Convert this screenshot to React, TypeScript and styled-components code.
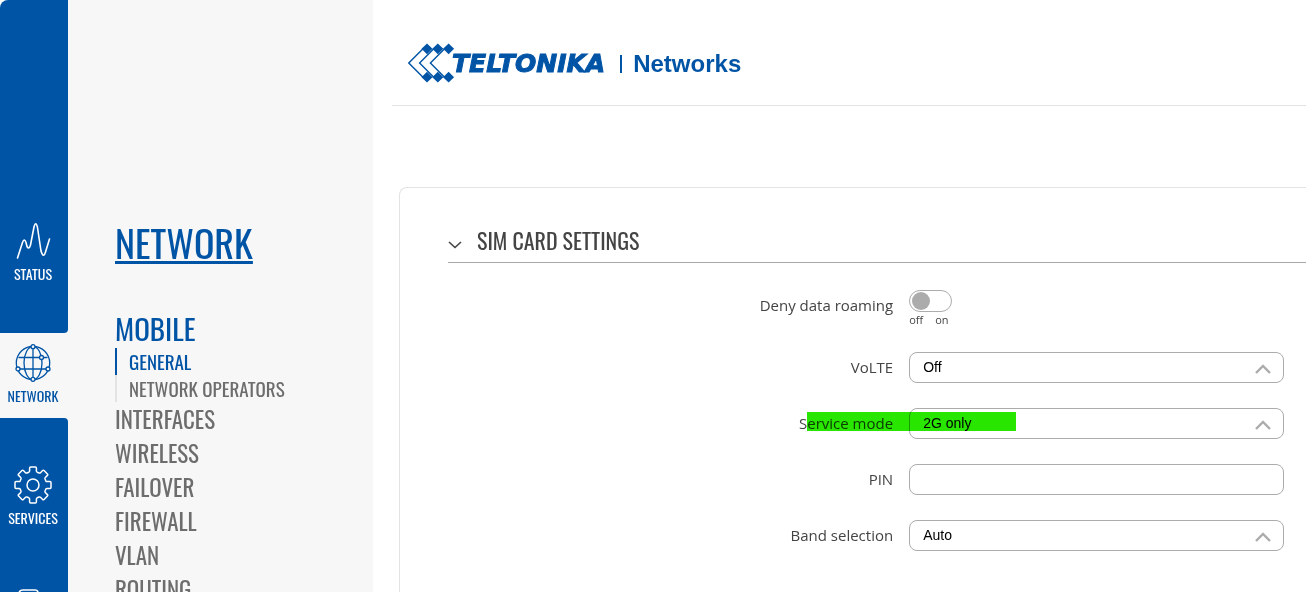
import React, { useState } from "react";
import styled, { createGlobalStyle, css } from "styled-components";

const blue = "#0054a6";
const panel = "#f7f7f7";
const condensed = `Oswald, "Liberation Sans Narrow", "Roboto Condensed", sans-serif`;

const GlobalStyle = createGlobalStyle`
  *, *::before, *::after { box-sizing: border-box; }
  body { margin: 0; background: #fff; color: #444; font-family: "Open Sans", sans-serif; }
`;

const Shell = styled.div`
  display: flex;
  height: 100vh;
  overflow: hidden;
`;

const Rail = styled.nav`
  flex: 0 0 68px;
  display: flex;
  flex-direction: column;
  background: ${panel};
  border-top-left-radius: 8px;
  overflow: hidden;
`;

const RailBlock = styled.div<{ $last?: boolean }>`
  display: flex;
  flex-direction: column;
  gap: 58px;
  background: ${blue};
  ${(p) =>
    p.$last
      ? css`
          flex: 1 0 auto;
          padding-top: 48px;
          border-top-right-radius: 4px;
        `
      : css`
          padding: 222px 0 48px;
          border-bottom-right-radius: 4px;
        `}
`;

const RailLink = styled.a<{ $active?: boolean }>`
  display: flex;
  flex-direction: column;
  align-items: center;
  gap: 3px;
  padding: ${(p) => (p.$active ? "11px 2px 11px 0" : "0 2px 0 0")};
  color: ${(p) => (p.$active ? blue : "#fff")};
  font: 400 14px/22px ${condensed};
  text-decoration: none;

  svg {
    display: block;
    width: 38px;
    height: 38px;
    fill: none;
    stroke: currentColor;
    stroke-linecap: round;
    stroke-linejoin: round;
  }
`;

const Menu = styled.nav`
  flex: 0 0 305px;
  padding: 211px 20px 0 47px;
  background: ${panel};
  font-family: ${condensed};
  font-weight: 400;
`;

const MenuTitle = styled.h1`
  margin: 0 0 36px;
  font-size: 38px;
  line-height: 62px;
  font-weight: 400;
  color: ${blue};
`;

const TitleLink = styled.a`
  color: inherit;
  text-decoration: underline;
  text-decoration-thickness: 3px;
  text-underline-offset: 2px;
`;

const MenuList = styled.ul`
  margin: 0;
  padding: 0;
  list-style: none;
`;

const MenuLink = styled.a<{ $open?: boolean }>`
  display: block;
  padding-bottom: ${(p) => (p.$open ? 1 : 0)}px;
  font-size: ${(p) => (p.$open ? 29 : 23)}px;
  line-height: ${(p) => (p.$open ? 38 : 34)}px;
  color: ${(p) => (p.$open ? blue : "#6d6d6d")};
  text-decoration: none;
`;

const SubLink = styled.a<{ $active?: boolean }>`
  display: block;
  padding-left: 12px;
  border-left: 2px solid ${(p) => (p.$active ? blue : "#e3e3e3")};
  font-size: 19px;
  line-height: 27px;
  color: ${(p) => (p.$active ? blue : "#6d6d6d")};
  text-decoration: none;
`;

const Main = styled.main`
  flex: 1 1 0;
  min-width: 0;
  padding-left: 19px;
`;

const Header = styled.header`
  display: flex;
  align-items: center;
  height: 106px;
  padding: 20px 16px 0;
  border-bottom: 1px solid #e3e3e3;
  color: ${blue};
`;

const LogoMark = styled.svg`
  display: block;
  width: 48px;
  height: 40px;
`;

const LogoText = styled.span`
  display: flex;
  align-items: center;
  margin-left: -4px;
  padding-top: 3px;
`;

const Brand = styled.span`
  font: italic 700 25px/32px "DejaVu Sans", sans-serif;
  -webkit-text-stroke: 1px ${blue};
`;

const BrandRule = styled.span`
  width: 2px;
  height: 18px;
  margin: 0 11px 0 15px;
  background: ${blue};
`;

const Division = styled.span`
  font: 700 24px/32px "Liberation Sans", Arial, sans-serif;
`;

const Card = styled.section`
  min-height: 600px;
  margin: 81px 0 0 7px;
  padding: 32px 0 0 48px;
  border: solid #e3e3e3;
  border-width: 1px 0 0 1px;
  border-top-left-radius: 8px;
`;

const CardTitle = styled.h2`
  margin: 0 0 27px;
  padding-bottom: 2px;
  border-bottom: 1px solid #a8a8a8;
  font: 400 22px/40px ${condensed};
`;

const Collapse = styled.button`
  display: flex;
  align-items: center;
  gap: 15px;
  width: 100%;
  padding: 0;
  border: 0;
  background: none;
  color: #444;
  font: inherit;
  text-align: left;

  svg {
    margin-top: 10px;
  }
`;

const Form = styled.form`
  display: flex;
  flex-direction: column;
  gap: 25px;
  padding-right: 22px;
`;

const Row = styled.div`
  position: relative;
  display: grid;
  grid-template-columns: minmax(0, 19fr) minmax(0, 16fr);
  column-gap: 16px;
  align-items: start;
  min-height: 31px;
`;

const RowLabel = styled.label`
  font-size: 15px;
  line-height: 30px;
  text-align: right;
`;

const control = css`
  display: block;
  width: 100%;
  height: 31px;
  padding: 0 40px 2px 13px;
  border: 1px solid #acacac;
  border-radius: 8px;
  background: #fff;
  color: #000;
  font: 14px "Liberation Sans", Arial, sans-serif;
`;

const SelectWrap = styled.div`
  display: grid;
  align-items: center;

  > * {
    grid-area: 1 / 1;
  }

  svg {
    justify-self: end;
    margin: 2px 13px 0 0;
    pointer-events: none;
  }
`;

const Select = styled.select`
  ${control}
  appearance: none;
`;

const TextInput = styled.input`
  ${control}
`;

const Switch = styled.div`
  display: flex;
  flex-direction: column;
`;

const SwitchInput = styled.input`
  appearance: none;
  width: 43px;
  height: 22px;
  margin: 0;
  padding: 1px 2px;
  border: 1px solid #acacac;
  border-radius: 11px;

  &::before {
    content: "";
    display: block;
    width: 18px;
    height: 18px;
    border-radius: 50%;
    background: #acacac;
  }

  &:checked::before {
    margin-left: auto;
  }
`;

const SwitchStates = styled.span`
  display: flex;
  gap: 12px;
  font-size: 11px;
  line-height: 15px;
`;

const Marker = styled.span`
  position: absolute;
  top: 4px;
  left: 43%;
  width: 25%;
  height: 19px;
  background: #28e600;
  mix-blend-mode: multiply;
  pointer-events: none;
`;

const StatusIcon = () => (
  <svg viewBox="0 0 38 38" strokeWidth="1.600" aria-hidden="true">
    <path d="M3.500 36L8.500 20.500Q10.300 15.500 12 20.500L13 24.500Q15 28 16.500 23L20 5Q21.700 -1.500 23.400 5L27 29Q29.500 37 31.500 30L35.500 17" />
  </svg>
);

const GlobeIcon = () => (
  <svg viewBox="0 0 38 38" strokeWidth="1.300" aria-hidden="true">
    <circle cx="19" cy="19" r="16.700" />
    <ellipse cx="19" cy="19" rx="9" ry="16.700" />
    <path d="M19 2.500V35.500M5 13.500H33M3 25H35" />
    <g fill={panel}>
      <circle cx="19" cy="2.700" r="2" />
      <circle cx="27.500" cy="13.500" r="2" />
      <circle cx="4" cy="25" r="2" />
      <circle cx="34" cy="25" r="2" />
      <circle cx="19" cy="35.300" r="2" />
    </g>
  </svg>
);

// Eight equal teeth around the hub, each rotated by 45 degrees.
const gearPath =
  Array.from({ length: 8 }, (_, k) => {
    const a = (k * Math.PI) / 4;
    const at = (x: number, y: number) =>
      `${(19 + x * Math.cos(a) - y * Math.sin(a)).toFixed(2)} ${(19 + x * Math.sin(a) + y * Math.cos(a)).toFixed(2)}`;
    return `${k ? "L" : "M"}${at(-4.2, -12.8)}Q${at(-3.4, -13.2)} ${at(-3.4, -14)}L${at(-3.4, -17)}Q${at(-3.4, -18)} ${at(-2.4, -18)}L${at(2.4, -18)}Q${at(3.4, -18)} ${at(3.4, -17)}L${at(3.4, -14)}Q${at(3.4, -13.2)} ${at(4.2, -12.8)}`;
  }).join("") + "Z";

const GearIcon = () => (
  <svg viewBox="0 0 38 38" strokeWidth="1.500" aria-hidden="true">
    <circle cx="19" cy="19" r="6" />
    <path d={gearPath} />
  </svg>
);

const SystemIcon = () => (
  <svg viewBox="0 0 38 38" strokeWidth="1.500" aria-hidden="true">
    <path d="M5 7Q5 3 9 3H21Q24 3 24 6V8H29V36H5z" />
  </svg>
);

const TeltonikaMark = () => (
  <LogoMark viewBox="0 0 48 40" aria-hidden="true">
    {[0, 10.8, 21.6].map((x) => (
      <g key={x}>
        <path d={`M${15.5 + x} 5.300L${0.8 + x} 20L${15.5 + x} 34.700`} fill="none" stroke={blue} strokeWidth="1.400" />
        <path
          d={`M${19 + x} .4l5.500 5.400-5.500 5.400-5.500-5.400zM${19 + x} 28.800l5.500 5.400-5.500 5.400-5.500-5.400z`}
          fill={blue}
        />
      </g>
    ))}
  </LogoMark>
);

const ArrowUp = () => (
  <svg width="16" height="10" viewBox="0 0 16 10" fill="none" stroke="#acacac" strokeWidth="2.400" aria-hidden="true">
    <path d="M1 9L8 2L15 9" />
  </svg>
);

const ArrowDown = () => (
  <svg width="14" height="8" viewBox="0 0 14 8" fill="none" stroke="#444" strokeWidth="1.600" aria-hidden="true">
    <path d="M1 1L7 6.500L13 1" />
  </svg>
);

type FieldProps = { id: string; label: string; options?: string[]; marked?: boolean };

function Field({ id, label, options, marked }: FieldProps) {
  return (
    <Row>
      <RowLabel htmlFor={id}>{label}</RowLabel>
      {options ? (
        <SelectWrap>
          <Select id={id}>
            {options.map((o) => (
              <option key={o}>{o}</option>
            ))}
          </Select>
          <ArrowUp />
        </SelectWrap>
      ) : (
        <TextInput id={id} type="text" />
      )}
      {marked && <Marker />}
    </Row>
  );
}

const sections = ["INTERFACES", "WIRELESS", "FAILOVER", "FIREWALL", "VLAN", "ROUTING"];

export default function App() {
  const [open, setOpen] = useState(true);
  return (
    <Shell>
      <GlobalStyle />
      <Rail>
        <RailBlock>
          <RailLink href="#status">
            <StatusIcon />
            STATUS
          </RailLink>
        </RailBlock>
        <RailLink href="#network" $active>
          <GlobeIcon />
          NETWORK
        </RailLink>
        <RailBlock $last>
          <RailLink href="#services">
            <GearIcon />
            SERVICES
          </RailLink>
          <RailLink href="#system" aria-label="System">
            <SystemIcon />
          </RailLink>
        </RailBlock>
      </Rail>
      <Menu>
        <MenuTitle>
          <TitleLink href="#network">NETWORK</TitleLink>
        </MenuTitle>
        <MenuList>
          <li>
            <MenuLink href="#mobile" $open>
              MOBILE
            </MenuLink>
            <MenuList>
              <li>
                <SubLink href="#general" $active>
                  GENERAL
                </SubLink>
              </li>
              <li>
                <SubLink href="#operators">NETWORK OPERATORS</SubLink>
              </li>
            </MenuList>
          </li>
          {sections.map((s) => (
            <li key={s}>
              <MenuLink href={`#${s.toLowerCase()}`}>{s}</MenuLink>
            </li>
          ))}
        </MenuList>
      </Menu>
      <Main>
        <Header>
          <TeltonikaMark />
          <LogoText>
            <Brand>TELTONIKA</Brand>
            <BrandRule />
            <Division>Networks</Division>
          </LogoText>
        </Header>
        <Card>
          <CardTitle>
            <Collapse type="button" aria-expanded={open} onClick={() => setOpen(!open)}>
              <ArrowDown />
              SIM CARD SETTINGS
            </Collapse>
          </CardTitle>
          {open && (
            <Form>
              <Row>
                <RowLabel htmlFor="roaming">Deny data roaming</RowLabel>
                <Switch>
                  <SwitchInput id="roaming" type="checkbox" />
                  <SwitchStates>
                    <span>off</span>
                    <span>on</span>
                  </SwitchStates>
                </Switch>
              </Row>
              <Field id="volte" label="VoLTE" options={["Off", "On", "Auto"]} />
              <Field id="mode" label="Service mode" options={["2G only", "3G only", "4G only"]} marked />
              <Field id="pin" label="PIN" />
              <Field id="band" label="Band selection" options={["Auto", "Manual"]} />
            </Form>
          )}
        </Card>
      </Main>
    </Shell>
  );
}
